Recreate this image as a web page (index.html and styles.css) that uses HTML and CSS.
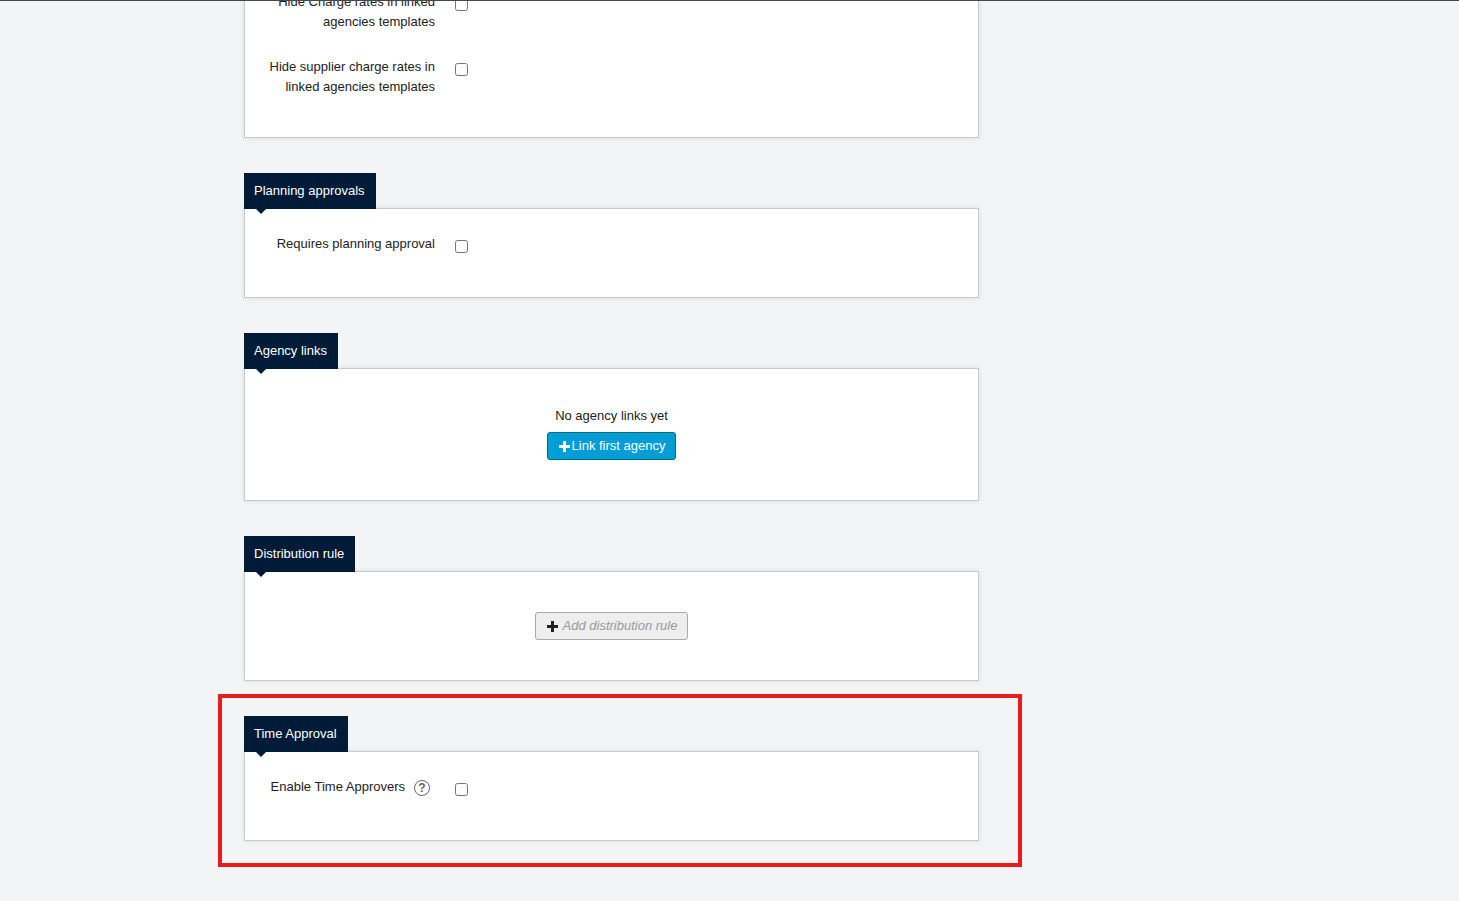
FILE: index.html
```html
<!DOCTYPE html>
<html lang="en">
<head>
    <meta charset="UTF-8">
    <meta name="viewport" content="width=device-width, initial-scale=1.0">
    <title>Client settings</title>
    <link rel="stylesheet" href="styles.css">
</head>
<body>
    <main class="content">
        <!-- Linked agencies templates -->
        <section class="section section-first">
            <div class="panel">
                <div class="row">
                    <label class="row-label" for="hideCharge">Hide Charge rates in linked agencies templates</label>
                    <input type="checkbox" id="hideCharge">
                </div>
                <div class="row">
                    <label class="row-label" for="hideSupplier">Hide supplier charge rates in linked agencies templates</label>
                    <input type="checkbox" id="hideSupplier">
                </div>
            </div>
        </section>

        <!-- Planning approvals -->
        <section class="section">
            <h2 class="tab">Planning approvals</h2>
            <div class="panel">
                <div class="row">
                    <label class="row-label" for="planning">Requires planning approval</label>
                    <input type="checkbox" id="planning">
                </div>
            </div>
        </section>

        <!-- Agency links -->
        <section class="section">
            <h2 class="tab">Agency links</h2>
            <div class="panel panel-empty">
                <p>No agency links yet</p>
                <button type="button" class="btn btn-primary">
                    <svg class="plus" viewBox="0 0 11 11"><path d="M4 0h3v4h4v3H7v4H4V7H0V4h4z"/></svg>Link first agency
                </button>
            </div>
        </section>

        <!-- Distribution rule -->
        <section class="section">
            <h2 class="tab">Distribution rule</h2>
            <div class="panel panel-empty">
                <button type="button" class="btn btn-disabled" disabled>
                    <svg class="plus" viewBox="0 0 11 11"><path d="M4 0h3v4h4v3H7v4H4V7H0V4h4z"/></svg>Add distribution rule
                </button>
            </div>
        </section>

        <!-- Time Approval -->
        <section class="section section-marked">
            <h2 class="tab">Time Approval</h2>
            <div class="panel">
                <div class="row">
                    <div class="row-label row-label-help">
                        <label for="timeApprovers">Enable Time Approvers</label>
                        <span class="help">?</span>
                    </div>
                    <input type="checkbox" id="timeApprovers">
                </div>
            </div>
        </section>
    </main>
</body>
</html>
```
FILE: styles.css
```css
* {
    margin: 0;
    padding: 0;
    box-sizing: border-box;
}
body {
    font-family: "Liberation Sans", Arial, sans-serif;
    font-size: 13px;
    line-height: 20px;
    color: #222;
    background: #f2f4f6;
    border-top: 1px solid #47474b;
}

.content {
    padding: 0 480px 60px 244px;
    overflow: hidden;
}

/* Sections */
.section {
    position: relative;
    margin-bottom: 35px;
}
.section-first {
    margin-top: -35px;
}
.tab {
    position: relative;
    z-index: 1;
    width: fit-content;
    height: 36px;
    margin-bottom: -1px;
    padding: 0 11px 0 10px;
    font-size: 13px;
    font-weight: 500;
    line-height: 35px;
    color: #fff;
    background: #001b38;
}
.tab::after {
    content: "";
    position: absolute;
    top: 100%;
    left: 12px;
    border: 5px solid transparent;
    border-top-color: #001b38;
    border-bottom: 0;
}
.panel {
    display: flex;
    flex-direction: column;
    gap: 25px;
    padding: 25px 20px 40px;
    background: #fff;
    border: 1px solid #c9cacc;
    box-shadow: 0 0 5px rgba(0, 0, 0, 0.1);
}
.panel-empty {
    align-items: center;
    gap: 9px;
    padding: 40px 20px;
}
.panel-empty p {
    line-height: 14px;
}

/* Red frame around the new setting */
.section-marked::after {
    content: "";
    position: absolute;
    top: -22px;
    right: -43px;
    bottom: -26px;
    left: -26px;
    border: 4px solid #e81c1c;
    pointer-events: none;
}

/* Form rows */
.row {
    display: flex;
    align-items: flex-start;
    gap: 20px;
    min-height: 23px;
}
.row-label {
    width: 170px;
    text-align: right;
}
.row-label-help {
    display: flex;
    justify-content: flex-end;
    gap: 9px;
    padding-right: 5px;
}
.row input {
    width: 13px;
    height: 13px;
    margin-top: 6px;
}
.help {
    width: 16px;
    height: 16px;
    margin-top: 3px;
    font-size: 12px;
    font-weight: bold;
    line-height: 14px;
    text-align: center;
    color: #666;
    border: 1px solid #666;
    border-radius: 50%;
}

/* Buttons */
.btn {
    display: flex;
    align-items: center;
    height: 28px;
    padding: 0 10px 2px;
    font-family: inherit;
    font-size: 13px;
    border: 1px solid;
    border-radius: 3px;
}
.btn-primary {
    color: #fff;
    background: #009dd6;
    border-color: #00717a;
}
.btn-disabled {
    gap: 5px;
    font-style: italic;
    color: #999;
    background: #eee;
    border-color: #aaa;
}
.plus {
    width: 11px;
    height: 11px;
    margin: 2px 2px 0 1px;
    fill: currentColor;
}
.btn-disabled .plus {
    margin-right: 0;
    fill: #222;
}
```
